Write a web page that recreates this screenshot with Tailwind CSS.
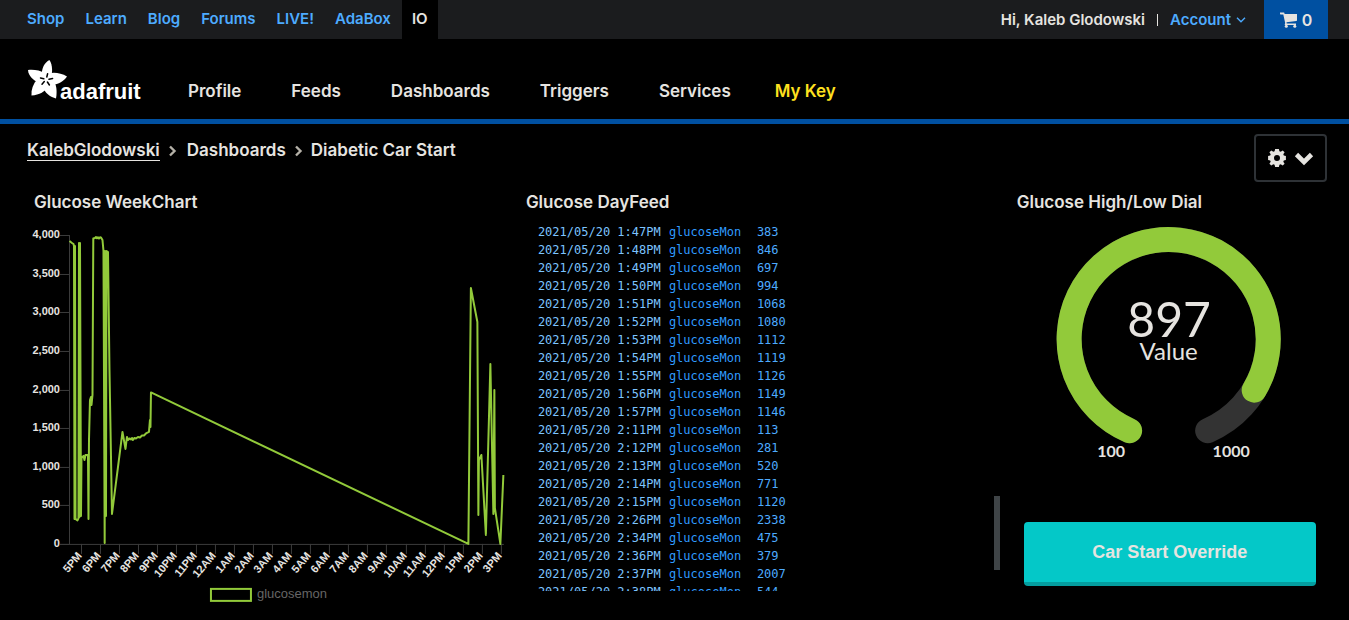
<!DOCTYPE html>
<html lang="en">
<head>
<meta charset="utf-8">
<meta name="viewport" content="width=device-width, initial-scale=1">
<title>Diabetic Car Start</title>
<script src="https://cdn.jsdelivr.net/npm/@tailwindcss/browser@4"></script>
</head>
<body class="bg-black text-[#e6e4e0] font-['Inter','Liberation_Sans',sans-serif] font-semibold overflow-x-hidden">

<div class="bg-[#1b1c1e] h-[39px] flex justify-between text-[15px] leading-[38px]">
  <nav class="flex gap-px pl-[17px] text-[#4dabff]" aria-label="Adafruit sites">
    <a href="#" class="px-[10px]">Shop</a>
    <a href="#" class="px-[10px]">Learn</a>
    <a href="#" class="px-[10px]">Blog</a>
    <a href="#" class="px-[10px]">Forums</a>
    <a href="#" class="px-[10px]">LIVE!</a>
    <a href="#" class="px-[10px]">AdaBox</a>
    <a href="#" class="px-[10px] bg-black text-[#e6e4e0]">IO</a>
  </nav>
  <div class="flex pr-[21px] leading-[40px]">
    <span>Hi, Kaleb Glodowski</span>
    <span class="w-px h-[12px] bg-[#e6e4e0] mt-[14px] mx-[12px]"></span>
    <a href="#" class="flex items-center text-[#4dabff] gap-[5px]">Account
      <svg class="w-[10px] h-[6px]" viewBox="0 0 10 6" fill="none" stroke="currentColor" stroke-width="1.4"><path d="M1 .8 5 4.8 9 .8"/></svg>
    </a>
    <a href="#" class="ml-[18px] w-[64px] bg-[#0050a1] flex items-center justify-center gap-[4px]" aria-label="Cart, 0 items">
      <svg class="w-[18px] h-[16px]" viewBox="0 0 18 16" fill="currentColor"><path d="M0 .6h3.800q.6 0 .8 1.300H17v6.400q0 .7-.7.8L6.500 10.300l.2 1.200H16v1.600H5.300q-.6 0-.6-.7l.5-1.500L3.300 2.400H.6Q0 2.400 0 1.500z"/><circle cx="6.300" cy="14.200" r="1.500"/><circle cx="14.800" cy="14.200" r="1.500"/></svg>
      <span class="text-base leading-[40px]">0</span>
    </a>
  </div>
</div>

<header class="h-[85px] border-b-[5px] border-[#0050a1] flex pl-[27px]">
  <a href="#" class="mt-[20px] w-[116px] shrink-0" aria-label="Adafruit home">
    <svg class="w-[116px] h-[46px]" viewBox="27 59 116 46">
      <g fill="#fff">
        <path d="M41.500 75C42 68 44 63 49.300 60c2.500 3 3.500 9 2.200 16z"/>
        <path d="M49 73.500c5-1.500 12-.5 18 3-3.500 5-9 8.500-16 8z"/>
        <path d="M53 79c3 4.500 4.500 11 3 19.500-5.500-1.500-11-5-13.500-12z"/>
        <path d="M49 86c-4 5.500-9.500 9-17.500 9.500-.5-6 1.500-11.500 6-16.500z"/>
        <path d="M39.500 83C33 80.500 28.500 76 28 70c5.500-.5 12 0 17 3.500z"/>
        <circle cx="46" cy="79.500" r="7.500"/>
      </g>
      <g stroke="#000" stroke-width="1.500" stroke-linecap="round">
        <path d="M46.800 77 47.600 73.800M49 79.300l3.600-.8M47.400 82l2 3M44.300 81.500l-2.300 2.700M43.800 78.800 40.500 78"/>
      </g>
      <text x="60" y="99" fill="#fff" font-family="Liberation Sans, sans-serif" font-weight="700" font-size="22">adafruit</text>
    </svg>
  </a>
  <nav class="ml-[45px] mt-[38px] flex gap-[50px] text-[17px] leading-[29px]" aria-label="Adafruit IO">
    <a href="#">Profile</a>
    <a href="#">Feeds</a>
    <a href="#">Dashboards</a>
    <a href="#">Triggers</a>
    <a href="#">Services</a>
    <a href="#" class="-ml-[6px] text-[#ffe01f]">My Key</a>
  </nav>
</header>

<main>
  <div class="flex justify-between items-start pl-[27px] pr-[22px] h-[66px]">
    <nav class="flex items-center mt-[15px] text-[17px] leading-[23px]" aria-label="Breadcrumb">
      <a href="#" class="border-b border-[#e6e4e0] leading-[20px]">KalebGlodowski</a>
      <svg class="w-[9px] h-[12px] mx-[8px]" viewBox="0 0 9 12" fill="none" stroke="#b5b1a8" stroke-width="2.400"><path d="M2 1.500 6.500 6 2 10.500"/></svg>
      <a href="#" class="pl-[2px]">Dashboards</a>
      <svg class="w-[9px] h-[12px] mx-[8px]" viewBox="0 0 9 12" fill="none" stroke="#b5b1a8" stroke-width="2.400"><path d="M2 1.500 6.500 6 2 10.500"/></svg>
      <span>Diabetic Car Start</span>
    </nav>
    <button type="button" aria-label="Dashboard settings" class="mt-[10px] w-[73px] h-[48px] border-2 border-[#2e3236] rounded flex items-center justify-center gap-[8px]">
      <svg class="w-[18px] h-[18px]" viewBox="-9 -9 18 18" fill="currentColor"><path fill-rule="evenodd" d="M-1.900-8.900h3.800l.5 2.100 1.300.5 2-1.300L7.600-5.700l-1.300 2 .5 1.300 2.100.5v3.800l-2.100.5-.5 1.300 1.300 2L5.700 7.600l-2-1.300-1.300.5-.5 2.100h-3.800l-.5-2.100-1.300-.5-2 1.300L-7.600 5.700l1.300-2-.5-1.300-2.100-.5v-3.800l2.100-.5.5-1.300-1.300-2L-5.700-7.600l2 1.300 1.300-.5zM0-3a3 3 0 1 0 0 6 3 3 0 1 0 0-6z"/></svg>
      <svg class="w-[20px] h-[14px] mt-[2px]" viewBox="0 0 20 14" fill="none" stroke="currentColor" stroke-width="4.600"><path d="M2.500 2.500 10 10 17.500 2.500"/></svg>
    </button>
  </div>

  <div class="grid grid-cols-[6fr_6fr_4fr] px-[20px]">
    <section>
      <h2 class="text-[17px] leading-[24px] pl-[14px]">Glucose WeekChart</h2>
      <svg class="w-full" viewBox="20 214 491 391" role="img" aria-label="glucosemon over the week" font-family="Liberation Sans, sans-serif">
        <g id="axes" stroke="#3c3c3c" stroke-width="1">
          <path d="M69.500 235V544.500M60 544.500H504" fill="none"/>
        </g>
        <g id="ylabels" fill="#e6e4e0" font-size="11" font-weight="700" text-anchor="end"></g>
        <g id="xlabels" fill="#e6e4e0" font-size="11" font-weight="700" text-anchor="end"></g>
        <path fill="none" stroke="#92ca3a" stroke-width="2" stroke-linejoin="round" d="M69.500 241 72 243 73.500 244 74 246 74.500 519 75 246 75.500 519 77.500 520.500 78.500 518.500 79 243 79.500 517 80 243 81 516 81.500 458 83.500 456 84.500 460 85.500 455 88 455 88.500 519 89 440 90 400 91 397 91.500 405 92.500 395 93 300 93.300 238.500 95 238 96 237 97 238.300 98 237.300 99 238.500 100 237.300 101 237.500 102.500 240 103.500 251 104.700 543 105 251 106 516 106.500 251 108 252 109.500 370 112 514 122.500 432 125.500 449 127 437 128 440 129.500 438.500 131 439.500 132 438 133 440 134.500 438 136 438.500 138 437 140 437.500 142 435.500 144 435.500 146 433.500 149 432 150 420 150.500 427 151 392.500 468.500 544 471 288 477.500 322 478.500 515 479 460 481.500 455 486 535 490.500 364 493.500 514 494.500 390 495 508 500.500 544 503.500 475"/>
        <rect x="211" y="589" width="40" height="12" fill="none" stroke="#92ca3a" stroke-width="2"/>
        <text x="257" y="598" fill="#666" font-size="13" font-weight="400">glucosemon</text>
      </svg>
    </section>

    <section class="flex flex-col">
      <h2 class="text-[17px] leading-[24px] pl-[15px]">Glucose DayFeed</h2>
      <div class="flex justify-between mt-[9px] mr-[2px] h-[368px] overflow-hidden">
        <table class="ml-[27px] self-start font-['DejaVu_Sans_Mono','Liberation_Mono',monospace] font-normal text-xs leading-[18px] whitespace-nowrap">
          <tbody id="feed"></tbody>
        </table>
        <div class="w-[6px] h-[74px] bg-[#3f4447] self-end mb-[21px]"></div>
      </div>
    </section>

    <section>
      <h2 class="text-[17px] leading-[24px] pl-[15px]">Glucose High/Low Dial</h2>
      <svg class="w-full" viewBox="1002 214 327 272" role="img" aria-label="Value 897, from 100 to 1000" fill="#e6e4e0" text-anchor="middle" font-family="Lato, Liberation Sans, sans-serif" font-weight="400">
        <g fill="none" stroke-width="25" stroke-linecap="round">
          <path stroke="#333" d="M1129.500 430.500A99.500 99.500 0 1 1 1207.500 430.500"/>
          <path stroke="#92ca3a" d="M1129.500 430.500A99.500 99.500 0 1 1 1254 390"/>
        </g>
        <text x="1169" y="337" font-size="48">897</text>
        <text x="1168.500" y="360" font-size="24">Value</text>
        <text x="1111" y="457" font-size="16" font-weight="700">100</text>
        <text x="1231" y="457" font-size="16" font-weight="700">1000</text>
      </svg>
      <button type="button" class="block mt-[36px] ml-[22px] w-[292px] h-[64px] rounded bg-[#04c8c8] border-b-4 border-[#049d9f] font-['Liberation_Sans',sans-serif] font-bold text-lg">Car Start Override</button>
    </section>
  </div>
</main>

<script>
  const ns = 'http://www.w3.org/2000/svg';
  function add(parent, tag, attrs, text) {
    const el = document.createElementNS(ns, tag);
    for (const k in attrs) el.setAttribute(k, attrs[k]);
    if (text) el.textContent = text;
    parent.appendChild(el);
  }
  const axes = document.getElementById('axes');
  const yl = document.getElementById('ylabels');
  const xl = document.getElementById('xlabels');
  for (let i = 0; i <= 8; i++) {
    const y = Math.round(544 - i * 38.6) + .5;
    add(axes, 'path', { d: `M60 ${y}H69` });
    add(yl, 'text', { x: 60, y: y + 3 }, (i * 500).toLocaleString('en-US'));
  }
  for (let i = 0; i < 23; i++) {
    const x = Math.floor(81.5 + i * 19.09) + .5;
    const h = 17 + i;
    add(axes, 'path', { d: `M${x} 544V554` });
    add(xl, 'text', { x: 0, y: 0, transform: `translate(${x + 1} 556) rotate(-50)` }, (h % 12 || 12) + (h % 24 < 12 ? 'AM' : 'PM'));
  }
  const feed = [['1:47',383],['1:48',846],['1:49',697],['1:50',994],['1:51',1068],['1:52',1080],['1:53',1112],['1:54',1119],['1:55',1126],['1:56',1149],['1:57',1146],['2:11',113],['2:12',281],['2:13',520],['2:14',771],['2:15',1120],['2:26',2338],['2:34',475],['2:36',379],['2:37',2007],['2:38',544]];
  document.getElementById('feed').innerHTML = feed.map(([t, v]) =>
    `<tr><td class="p-0 w-[131px] text-[#7cc4ff]">2021/05/20 ${t}PM</td><td class="p-0 w-[88px] text-[#2f9bff]">glucoseMon</td><td class="p-0 text-[#4dabff]">${v}</td></tr>`).join('');
</script>
</body>
</html>
